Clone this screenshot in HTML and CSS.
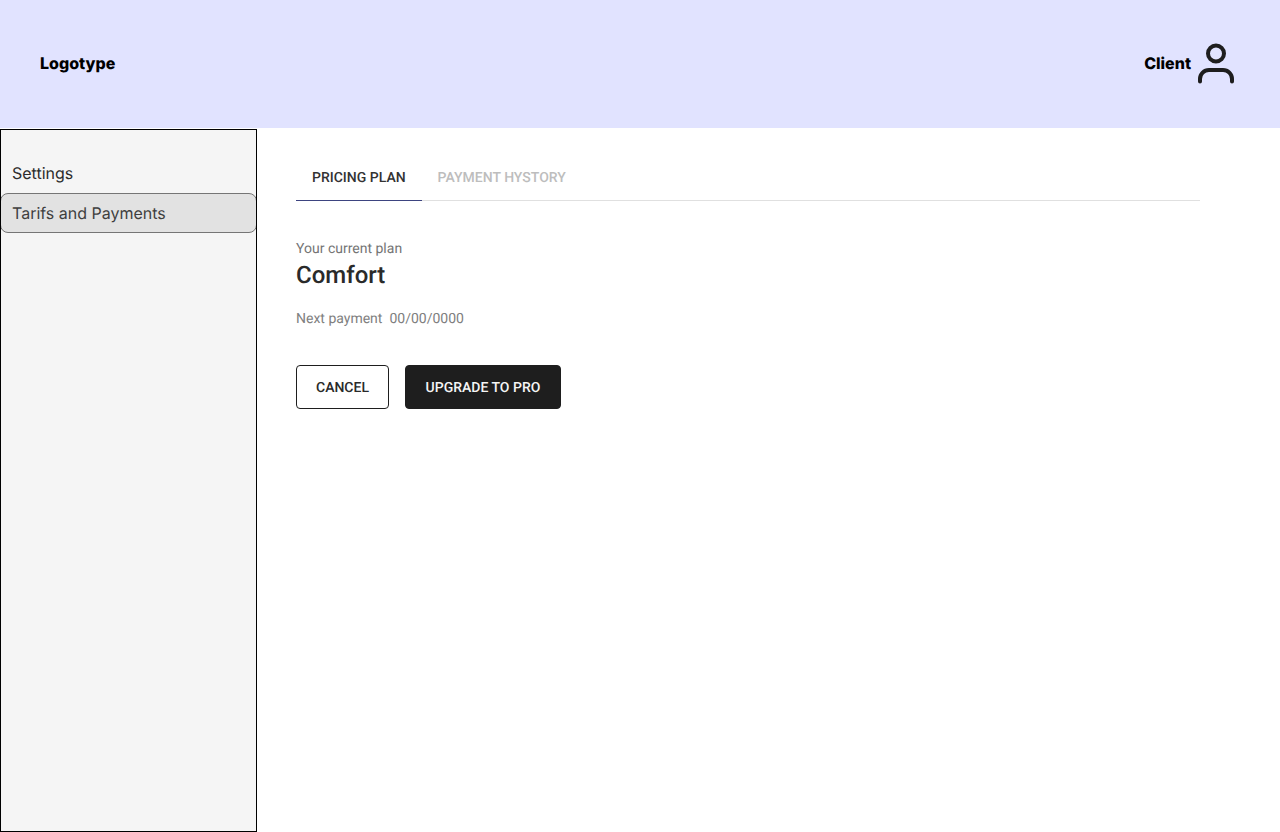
FILE: index.html
```
<!DOCTYPE html>
<html lang="en">
<head>
<meta charset="utf-8">
<title>Tarifs and Payments</title>
<link rel="stylesheet" href="styles.css">
</head>
<body>
<header class="topbar">
  <div class="logo">Logotype</div>
  <div class="client">
    <span class="client-name">Client</span>
    <svg class="user-icon" width="48" height="48" viewBox="0 0 48 48" fill="none" stroke="#1e1e1e" stroke-width="4" stroke-linecap="round">
      <circle cx="24" cy="13.5" r="8"/>
      <path d="M8 41.5v-2.5a9 9 0 0 1 9-9h14a9 9 0 0 1 9 9v2.5"/>
    </svg>
  </div>
</header>
<div class="main">
  <nav class="sidebar">
    <a class="nav-item">Settings</a>
    <a class="nav-item active">Tarifs and Payments</a>
  </nav>
  <section class="content">
    <div class="tabs">
      <div class="tab selected">PRICING PLAN</div>
      <div class="tab">PAYMENT HYSTORY</div>
    </div>
    <div class="plan-label">Your current plan</div>
    <h1 class="plan-name">Comfort</h1>
    <div class="next"><span>Next payment</span><span>00/00/0000</span></div>
    <div class="actions">
      <button class="btn outline">CANCEL</button>
      <button class="btn solid">UPGRADE TO PRO</button>
    </div>
  </section>
</div>
</body>
</html>
```
FILE: styles.css
```
* { box-sizing: border-box; }
html, body { margin: 0; height: 100%; }
body { font-family: Roboto, sans-serif; background: #fff; color: #1e1e1e; overflow: hidden; text-rendering: geometricPrecision; }
.topbar { height: 128px; background: #e1e3ff; display: flex; align-items: center; justify-content: space-between; padding: 0 40px; }
.logo, .client { font-family: Inter, sans-serif; font-size: 16px; font-weight: 800; color: #000; }
.logo, .client-name { padding-bottom: 2px; }
.client { display: flex; align-items: center; }
.client-name { margin-right: 1px; }
.user-icon { display: block; }
.main { display: flex; height: 704px; }
.sidebar { width: 257px; height: 703px; margin-top: 1px; outline: 1px solid #000; outline-offset: -1px; background: #f5f5f5; padding-top: 24px; flex: none; }
.nav-item { display: flex; align-items: center; height: 40px; padding: 0 12px; font-family: Inter, sans-serif; font-size: 16px; font-weight: 400; color: #2c2c2c; }
.nav-item.active { padding: 0 11px; background: #e2e2e2; border: 1px solid #757575; border-radius: 8px; color: #3f3f3f; }
.content { padding: 24px 0 0 39px; width: 943px; }
.tabs { display: flex; height: 49px; border-bottom: 1px solid #e0e0e0; }
.tab { padding: 0 16px; height: 49px; line-height: 52px; font-size: 14px; font-weight: 500; color: #bdbdbd; }
.tab.selected { color: #333; border-bottom: 1px solid #3d4480; }
.plan-label { margin-top: 40px; font-size: 14px; line-height: 16px; color: #757575; }
.plan-name { margin: 2px 0 0; font-size: 24px; font-weight: 500; line-height: 32px; color: #2a2a2a; }
.next { margin-top: 20px; font-size: 14px; line-height: 16px; color: #808080; display: flex; gap: 7px; }
.actions { display: flex; gap: 16px; margin-top: 38px; }
.btn { height: 44px; padding: 2px 19px 0; border-radius: 4px; font: 500 14px Roboto, sans-serif; border: 1px solid #1e1e1e; text-rendering: geometricPrecision; }
.outline { background: #fff; color: #2a2a2a; }
.solid { background: #1e1e1e; color: #f5f5f5; min-width: 156px; }
```
